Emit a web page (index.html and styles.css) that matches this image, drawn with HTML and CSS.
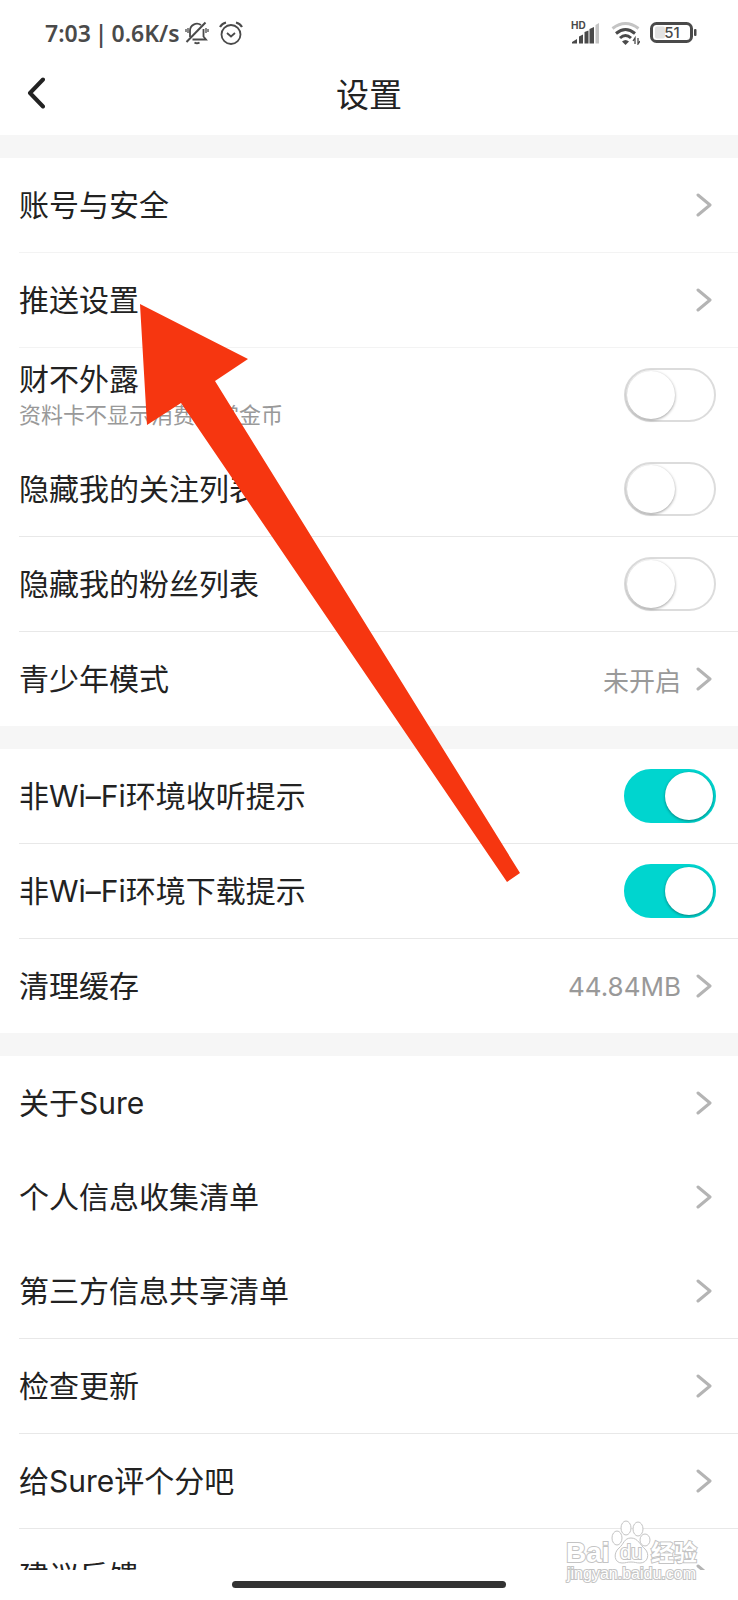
FILE: index.html
```html
<!DOCTYPE html>
<html lang="zh-CN">
<head>
    <meta charset="UTF-8">
    <meta name="viewport" content="width=device-width, initial-scale=1.0">
    <title>设置</title>
    <link rel="stylesheet" href="styles.css">
</head>
<body>
    <svg width="0" height="0" class="sprite" aria-hidden="true">
        <symbol id="chevron" viewBox="0 0 16 24">
            <path d="M2 2l12 10-12 10" fill="none" stroke="#b4b4b4" stroke-width="3" stroke-linecap="round" stroke-linejoin="round"/>
        </symbol>
    </svg>

    <div class="app">
        <div class="status-bar">
            <div class="status-text">
                <span>7:03</span>
                <span>|</span>
                <span>0.6K/s</span>
            </div>
            <!-- Muted bell -->
            <svg class="icon-bell" width="24" height="24" viewBox="0 0 24 24" fill="none" stroke="#4a4a4a" stroke-width="1.8">
                <path d="M5 16V10a7 7 0 0 1 11-6M18.5 8v7.5l2.500 3H7.500"/>
                <path d="M9.500 21.500q2.500 1.500 5 0" stroke-width="2"/>
                <path d="M1.500 21L20.500 1.500" stroke-width="2"/>
                <path d="M3 7v5M1 8v3M21 7v5M23 8v3" stroke-width="1.300"/>
            </svg>
            <!-- Alarm clock -->
            <svg class="icon-alarm" width="24" height="24" viewBox="0 0 24 24" fill="none" stroke="#4a4a4a" stroke-width="1.800">
                <circle cx="12" cy="13.500" r="9.500"/>
                <path d="M8 12l4 3.500 4-3.500"/>
                <path d="M1 6q2-3.500 6-4.500M23 6q-2-3.500-6-4.500" stroke-width="2.200"/>
            </svg>
            <div class="status-right">
                <!-- Signal -->
                <svg width="30" height="24" viewBox="0 0 30 24" fill="#4a4a4a">
                    <text x="0" y="8" class="hd-text">HD</text>
                    <path d="M1 22.500v-1.500l5-3v4.500zM8 22.500v-7l4-2v9zM13.500 22.500V11l4-1.500v13zM18.500 22.500V8l4.500-2v16.500z"/>
                    <path d="M24.500 22.500V4l3.500-2v20.500z" fill="#c4c4c4"/>
                </svg>
                <!-- Wi-Fi -->
                <svg class="icon-wifi" width="29" height="24" viewBox="0 0 29 24" fill="none" stroke="#4a4a4a" stroke-width="3">
                    <path d="M1.500 7.500q13-10 26 0" stroke="#c4c4c4"/>
                    <path d="M5 12.500q9.500-8 19 0"/>
                    <path d="M9 17q5.500-5 11 0"/>
                    <path d="M11 20.500q3.500-3 7 0l-3.500 3.500z" fill="#4a4a4a" stroke="none"/>
                    <path d="M24 23v-6l-2 3M27 17v6l2-3" stroke-width="1.300"/>
                </svg>
                <!-- Battery -->
                <svg width="47" height="22" viewBox="0 0 47 22">
                    <rect x="1.500" y="1.500" width="40" height="18" rx="5" fill="none" stroke="#4a4a4a" stroke-width="3"/>
                    <rect x="5" y="4.500" width="10" height="12" rx="2" fill="#e2e2e2"/>
                    <rect x="44" y="7" width="2.500" height="7" rx="1" fill="#4a4a4a"/>
                    <text x="22" y="16" class="battery-text">51</text>
                </svg>
            </div>
        </div>

        <header class="nav">
            <button type="button" class="back" aria-label="返回">
                <svg width="18" height="32" viewBox="0 0 18 32" fill="none" stroke="#222" stroke-width="4" stroke-linecap="round" stroke-linejoin="round">
                    <path d="M16 2.500L3 16l13 13.500"/>
                </svg>
            </button>
            <h1>设置</h1>
        </header>

        <main>
            <section class="group">
                <a href="#" class="row divided light">
                    <span class="label">账号与安全</span>
                    <svg class="chevron"><use href="#chevron"/></svg>
                </a>
                <a href="#" class="row divided light">
                    <span class="label">推送设置</span>
                    <svg class="chevron"><use href="#chevron"/></svg>
                </a>
                <label class="row" for="hideWealth">
                    <span class="label">财不外露<small>资料卡不显示消费打赏金币</small></span>
                    <input type="checkbox" class="switch" id="hideWealth">
                </label>
                <label class="row divided" for="hideFollowing">
                    <span class="label">隐藏我的关注列表</span>
                    <input type="checkbox" class="switch" id="hideFollowing">
                </label>
                <label class="row divided" for="hideFans">
                    <span class="label">隐藏我的粉丝列表</span>
                    <input type="checkbox" class="switch" id="hideFans">
                </label>
                <a href="#" class="row">
                    <span class="label">青少年模式</span>
                    <span class="value">未开启</span>
                    <svg class="chevron"><use href="#chevron"/></svg>
                </a>
            </section>

            <section class="group">
                <label class="row divided" for="listenTip">
                    <span class="label">非Wi–Fi环境收听提示</span>
                    <input type="checkbox" class="switch" id="listenTip" checked>
                </label>
                <label class="row divided" for="downloadTip">
                    <span class="label">非Wi–Fi环境下载提示</span>
                    <input type="checkbox" class="switch" id="downloadTip" checked>
                </label>
                <a href="#" class="row">
                    <span class="label">清理缓存</span>
                    <span class="value">44.84MB</span>
                    <svg class="chevron"><use href="#chevron"/></svg>
                </a>
            </section>

            <section class="group">
                <a href="#" class="row">
                    <span class="label">关于Sure</span>
                    <svg class="chevron"><use href="#chevron"/></svg>
                </a>
                <a href="#" class="row">
                    <span class="label">个人信息收集清单</span>
                    <svg class="chevron"><use href="#chevron"/></svg>
                </a>
                <a href="#" class="row divided">
                    <span class="label">第三方信息共享清单</span>
                    <svg class="chevron"><use href="#chevron"/></svg>
                </a>
                <a href="#" class="row divided">
                    <span class="label">检查更新</span>
                    <svg class="chevron"><use href="#chevron"/></svg>
                </a>
                <a href="#" class="row divided">
                    <span class="label">给Sure评个分吧</span>
                    <svg class="chevron"><use href="#chevron"/></svg>
                </a>
                <a href="#" class="row">
                    <span class="label">建议反馈</span>
                    <svg class="chevron"><use href="#chevron"/></svg>
                </a>
            </section>
        </main>

        <div class="home-bar"><span></span></div>

        <!-- Arrow pointing at 推送设置 -->
        <svg class="arrow" width="382" height="580" viewBox="0 0 382 580" aria-hidden="true">
            <path d="M0 0L108 55 75 77 380 569 367 578 41 99 7 121z" fill="#f63610"/>
        </svg>

        <!-- Watermark -->
        <svg class="watermark" width="138" height="70" viewBox="0 0 138 70">
            <text x="3" y="46" class="wm-bai">Bai</text>
            <g fill="#fff" stroke="#c4c4c4">
                <ellipse cx="54" cy="22" rx="5" ry="7"/>
                <ellipse cx="63" cy="12" rx="5" ry="7"/>
                <ellipse cx="75" cy="13" rx="5" ry="7"/>
                <ellipse cx="82" cy="24" rx="5" ry="6"/>
                <path d="M68 22c-7 0-7 6-12 10-6 5-5 15 3 15 4 0 5-1 9-1s5 1 9 1c8 0 10-9 5-14-5-4-7-11-14-11z"/>
            </g>
            <text x="57" y="43" class="wm-du">du</text>
            <text x="88" y="45" class="wm-exp">经验</text>
            <text x="4" y="63" class="wm-url">jingyan.baidu.com</text>
        </svg>
    </div>
</body>
</html>
```
FILE: styles.css
```css
:root {
    --text-color: #222;
    --muted-color: #999;
    --status-color: #4a4a4a;
    --band-color: #f6f6f6;
    --line-color: #e8e8e8;
    --accent-color: #00d5cf;
}

* {
    margin: 0;
    padding: 0;
    box-sizing: border-box;
}

body {
    background-color: #fff;
    color: var(--text-color);
    font-family: Inter, "Noto Sans CJK SC", sans-serif;
}

.sprite {
    position: absolute;
}

.app {
    position: relative;
    display: flex;
    flex-direction: column;
    height: 100vh;
    overflow: hidden;
}

/* Status bar */
.status-bar {
    display: flex;
    align-items: center;
    flex-shrink: 0;
    height: 55px;
    padding: 10px 41px 0 45px;
}

.status-text {
    display: flex;
    gap: 4px;
    font-family: "Noto Sans", sans-serif;
    font-size: 23px;
    font-weight: 600;
    color: var(--status-color);
    white-space: nowrap;
}

.icon-bell {
    margin-left: 5px;
}

.icon-alarm {
    margin-left: 10px;
}

.status-right {
    display: flex;
    align-items: center;
    gap: 10px;
    margin-left: auto;
}

.hd-text {
    font-size: 10px;
    font-weight: 700;
}

.battery-text {
    font-size: 15px;
    font-weight: 500;
    text-anchor: middle;
    fill: var(--status-color);
}

/* Title bar */
.nav {
    display: grid;
    grid-template-columns: 1fr auto 1fr;
    align-items: center;
    flex-shrink: 0;
    height: 80px;
    padding: 0 27px 4px;
}

.nav h1 {
    font-size: 33px;
    font-weight: 400;
}

.back {
    display: flex;
    justify-self: start;
    border: none;
    background: none;
    cursor: pointer;
}

/* Settings list */
main {
    flex: 1;
    min-height: 0;
    overflow: hidden;
}

.group {
    border-top: 23px solid var(--band-color);
    padding-left: 19px;
}

.row {
    display: flex;
    align-items: center;
    box-sizing: content-box;
    height: 94px;
    padding-right: 22px;
    color: inherit;
    text-decoration: none;
    cursor: pointer;
}

.row.divided {
    border-bottom: 1px solid var(--line-color);
}

.row.light {
    border-bottom-color: #f3f3f3;
}

.label {
    flex: 1;
    font-size: 30px;
    line-height: 40px;
}

.label small {
    display: block;
    font-size: 22px;
    line-height: 32px;
    color: var(--muted-color);
}

.value {
    margin-right: 15px;
    font-size: 26px;
    color: var(--muted-color);
}

.chevron {
    width: 16px;
    height: 24px;
    margin-right: 4px;
}

.switch {
    appearance: none;
    display: flex;
    width: 92px;
    height: 54px;
    padding: 1px;
    border: 2px solid #dcdcdc;
    border-radius: 27px;
    background-color: #fff;
    cursor: pointer;
}

.switch::before {
    content: "";
    width: 48px;
    height: 48px;
    border-radius: 50%;
    background-color: #fff;
    box-shadow: 0 1px 3px rgba(0, 0, 0, 0.4);
}

.switch:checked {
    justify-content: flex-end;
    border-color: var(--accent-color);
    background-color: var(--accent-color);
}

/* Gesture bar */
.home-bar {
    display: flex;
    justify-content: center;
    flex-shrink: 0;
    height: 30px;
    padding-top: 11px;
}

.home-bar span {
    width: 37%;
    height: 7px;
    border-radius: 4px;
    background-color: #333;
}

/* Overlays */
.arrow {
    position: absolute;
    top: 304px;
    left: 140px;
    pointer-events: none;
}

.watermark {
    position: absolute;
    right: 37px;
    bottom: 14px;
    pointer-events: none;
}

.watermark text {
    font-family: "Liberation Sans", "Noto Sans CJK SC", sans-serif;
    font-weight: 700;
    fill: #fff;
    stroke: #c4c4c4;
    stroke-width: 2px;
    paint-order: stroke;
}

.watermark .wm-bai {
    font-size: 28px;
}

.watermark .wm-du {
    font-size: 20px;
    font-weight: 400;
}

.watermark .wm-exp {
    font-size: 23px;
}

.watermark .wm-url {
    font-size: 16px;
    font-weight: 400;
    stroke-width: 2px;
}
```
